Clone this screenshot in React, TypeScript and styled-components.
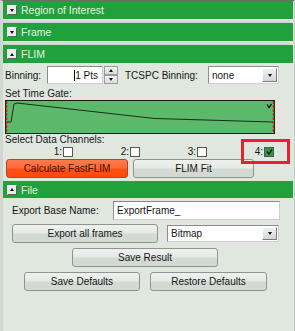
import React from 'react';
import styled, { createGlobalStyle, css } from 'styled-components';

const Global = createGlobalStyle`
  body {
    margin: 0;
    font-family: "Liberation Sans", Arial, sans-serif;
    font-size: 10px;
    color: #161616;
  }
`

const Frame = styled.div`
  position: relative;
  box-sizing: border-box;
  width: 295px;
  height: 331px;
  overflow: hidden;
  background: #dfe7de;
  border-top: 1px solid #6c6c6c;
  border-left: 3px solid #cfd5cf;
  border-right: 1px solid #c3c9c3;
  padding-right: 1px;
`

const Header = styled.div<{ $h?: number }>`
  display: flex;
  align-items: center;
  gap: 4px;
  height: ${p => p.$h || 18}px;
  padding-left: 4px;
  background: #21a13b;
  color: #e4f4e4;
  font-size: 10.5px;
`

const Toggle = styled.span`
  display: flex;
  align-items: center;
  justify-content: center;
  box-sizing: border-box;
  width: 10px;
  height: 10px;
  background: #e9ece9;
  border: 1px solid;
  border-color: #ffffff #5e5e5e #5e5e5e #ffffff;
`

const Tri = styled.span<{ $up?: boolean }>`
  width: 0;
  height: 0;
  border-left: 2.5px solid transparent;
  border-right: 2.5px solid transparent;
  ${p => p.$up
    ? css`border-bottom: 3px solid #111;`
    : css`border-top: 3px solid #111;`}
`

const Divider = styled.div`
  height: 4px;
  box-sizing: border-box;
  background: #d7dcd7;
  border-top: 1px solid #e9ede9;
  border-bottom: 1px solid #cdd2cd;
  margin-right: 3px;
`

const Content = styled.div<{ $pl: number }>`
  padding: 3px 0 0 ${p => p.$pl}px;
`

const Row = styled.div<{ $h?: number; $mt?: number }>`
  display: flex;
  align-items: center;
  height: ${p => p.$h || 18}px;
  margin-top: ${p => p.$mt || 0}px;
`

const Label = styled.span<{ $w?: number; $ml?: number }>`
  width: ${p => (p.$w ? `${p.$w}px` : 'auto')};
  margin-left: ${p => p.$ml || 0}px;
  flex-shrink: 0;
  white-space: nowrap;
`

const Field = styled.div<{ $w: number; $h?: number; $right?: boolean }>`
  display: flex;
  align-items: center;
  justify-content: ${p => (p.$right ? 'flex-end' : 'flex-start')};
  box-sizing: border-box;
  width: ${p => p.$w}px;
  height: ${p => p.$h || 18}px;
  padding: 0 4px 0 3px;
  background: #fff;
  border: 1px solid;
  border-color: #8c8c8c #d0d0d0 #d0d0d0 #8c8c8c;
  font-size: 10px;
  white-space: nowrap;
`

const Caret = styled.span`
  width: 1px;
  height: 11px;
  background: #111;
`

const Spinner = styled.div`
  display: flex;
  flex-direction: column;
  width: 14px;
  height: 18px;
  margin-left: 1px;
`

const SpinBtn = styled.div`
  flex: 1;
  display: flex;
  align-items: center;
  justify-content: center;
  background: linear-gradient(#f3f4f3, #d9ddd9);
  border: 1px solid #9a9a9a;
  box-sizing: border-box;
`

const Select = styled.div<{ $w: number; $h?: number; $ml?: number }>`
  display: flex;
  box-sizing: border-box;
  width: ${p => p.$w}px;
  height: ${p => p.$h || 17}px;
  margin-left: ${p => p.$ml || 0}px;
  background: #fff;
  border: 1px solid;
  border-color: #8c8c8c #d0d0d0 #d0d0d0 #8c8c8c;
`

const SelectText = styled.span`
  flex: 1;
  display: flex;
  align-items: center;
  padding-left: 3px;
`

const DropBtn = styled.span`
  display: flex;
  align-items: center;
  justify-content: center;
  width: 15px;
  margin: 1px;
  background: linear-gradient(#eef0ee, #d3d7d3);
  border: 1px solid;
  border-color: #fff #7a7a7a #7a7a7a #fff;
  box-sizing: border-box;
`

const Caption = styled.div<{ $mt?: number }>`
  height: 12px;
  line-height: 12px;
  margin-top: ${p => p.$mt || 0}px;
`

const Chart = styled.svg`
  display: block;
  width: 270px;
  height: 34px;
`

const Channels = styled.div`
  display: grid;
  grid-template-columns: repeat(4, 67px);
  height: 11px;
  margin-left: 1px;
`

const Channel = styled.label`
  display: flex;
  align-items: center;
  justify-content: flex-end;
  gap: 1px;
`

const Check = styled.span<{ $on?: boolean }>`
  display: flex;
  align-items: center;
  justify-content: center;
  box-sizing: border-box;
  width: 10px;
  height: 10px;
  background: ${p => (p.$on ? '#2e9a46' : '#fff')};
  border: 1px solid #555;
`

const Button = styled.div<{ $w: number; $ml?: number; $hot?: boolean }>`
  display: flex;
  align-items: center;
  justify-content: center;
  box-sizing: border-box;
  width: ${p => p.$w}px;
  height: 19px;
  margin-left: ${p => p.$ml || 0}px;
  border: 1px solid #8f948f;
  border-radius: 3px;
  font-size: 10px;
  white-space: nowrap;
  background: linear-gradient(#eef1ee 0%, #e6eae6 48%, #d3d9d3 52%, #d3d9d3 100%);
  ${p => p.$hot && css`
    border-color: #b0462a;
    color: #3c1205;
    background: linear-gradient(#ff7a4c 0%, #ff6a38 48%, #ff5014 52%, #ff4a0c 100%);
  `}
`

const Spacer = styled.div`
  height: 3px;
`

const Annotation = styled.div`
  position: absolute;
  left: 238px;
  top: 138px;
  width: 49px;
  height: 25px;
  box-sizing: border-box;
  border: 3px solid #e8222c;
`

const Section = ({ title, open, h }: { title: string; open?: boolean; h?: number }) => (
  <Header $h={h}>
    <Toggle><Tri $up={open} /></Toggle>
    <span>{title}</span>
  </Header>
)

const Tick = () => (
  <svg width="7" height="6" viewBox="0 0 7 6">
    <path d="M1 2.5 L3 5 L6 0.5" fill="none" stroke="#102010" strokeWidth="1.4" />
  </svg>
)

const GateChart = () => (
  <Chart viewBox="0 0 270 34">
    <rect x="0.5" y="0.5" width="269" height="33" fill="#5cb96c" stroke="#1a1a1a" />
    <polyline
      points="2,22 6,22 9,4 12,3 145,18 150,18.5 268,22"
      fill="none" stroke="#1a2a1a" strokeWidth="1"
    />
    <line x1="1.5" y1="1" x2="1.5" y2="33" stroke="#e0141c" strokeWidth="1.5" strokeDasharray="3 1" />
    <line x1="268.5" y1="1" x2="268.5" y2="33" stroke="#e0141c" strokeWidth="1.5" strokeDasharray="3 1" />
    <path d="M262 4.5 L264 7.5 L266.5 4" fill="none" stroke="#101010" strokeWidth="1.3" />
  </Chart>
)

const channels = [1, 2, 3, 4]

export default function App() {
  return (
    <>
      <Global />
      <Frame>
        <Section title="Region of Interest" />
        <Divider />
        <Section title="Frame" />
        <Divider />
        <Section title="FLIM" open />

        <Content $pl={2}>
          <Row>
            <Label $w={42}>Binning:</Label>
            <Field $w={56} $right><Caret />1 Pts</Field>
            <Spinner>
              <SpinBtn><Tri $up /></SpinBtn>
              <SpinBtn><Tri /></SpinBtn>
            </Spinner>
            <Label $w={83} $ml={7}>TCSPC Binning:</Label>
            <Select $w={71} $h={18}>
              <SelectText>none</SelectText>
              <DropBtn><Tri /></DropBtn>
            </Select>
          </Row>
          <Caption $mt={4}>Set Time Gate:</Caption>
          <GateChart />
          <Caption>Select Data Channels:</Caption>
          <Channels>
            {channels.map(n => (
              <Channel key={n}>
                {n}:<Check $on={n === 4}>{n === 4 && <Tick />}</Check>
              </Channel>
            ))}
          </Channels>
          <Row $h={19} $mt={2}>
            <Button $w={122} $ml={1} $hot>Calculate FastFLIM</Button>
            <Button $w={121} $ml={5}>FLIM Fit</Button>
          </Row>
        </Content>

        <Spacer />
        <Section title="File" open h={17} />

        <Content $pl={9}>
          <Row $h={19}>
            <Label $w={101}>Export Base Name:</Label>
            <Field $w={167} $h={19}>ExportFrame_</Field>
          </Row>
          <Row $h={19} $mt={4}>
            <Button $w={146}>Export all frames</Button>
            <Select $w={112} $ml={9}>
              <SelectText>Bitmap</SelectText>
              <DropBtn><Tri /></DropBtn>
            </Select>
          </Row>
          <Row $h={19} $mt={5}>
            <Button $w={146} $ml={60}>Save Result</Button>
          </Row>
          <Row $h={19} $mt={5}>
            <Button $w={116} $ml={12}>Save Defaults</Button>
            <Button $w={117} $ml={10}>Restore Defaults</Button>
          </Row>
        </Content>

        <Annotation />
      </Frame>
    </>
  )
}
